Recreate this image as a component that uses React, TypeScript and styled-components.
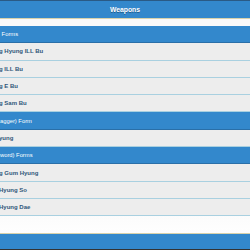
import React from 'react';

import styled, { createGlobalStyle } from 'styled-components';

const sections = [
  { title: ' Forms', items: ['g Hyung ILL Bu', 'g ILL Bu', 'g E Bu', 'g Sam Bu'] },
  { title: 'agger) Form', items: ['yung'] },
  { title: 'word) Forms', items: ['g Gum Hyung', 'Hyung So', 'Hyung Dae'] },
];

const App = () => {
  return (
    <Page>
      <GlobalStyle />
      <Header>
        <Title>Weapons</Title>
      </Header>
      <Content>
        <List>
          {sections.map((section) => (
            <React.Fragment key={section.title}>
              <Divider>{section.title}</Divider>
              {section.items.map((item) => (
                <Item key={item}>{item}</Item>
              ))}
            </React.Fragment>
          ))}
        </List>
      </Content>
      <Footer />
    </Page>
  );
};

export default App;

const GlobalStyle = createGlobalStyle`
  html, body {
    margin: 0;
    padding: 0;
    overflow: hidden;
  }
  body {
    font-family: 'Liberation Sans', Arial, sans-serif;
  }
`;

const Page = styled.div`
  display: flex;
  flex-direction: column;
  width: 250px;
  height: 250px;
  background: #f9f9f9;
`;

const Header = styled.header`
  display: flex;
  justify-content: center;
  align-items: center;
  height: 17px;
  border-top: 1px solid #2a5a85;
  border-bottom: 1px solid #d8d2ac;
  background: #3388cc;
`;

const Title = styled.h1`
  margin: 0;
  font-size: 6.8px;
  font-weight: bold;
  color: #fff;
  text-shadow: 0 1px 0 #1f5f8f;
`;

const Content = styled.main`
  flex: 1;
  padding-top: 7px;
  background: linear-gradient(#f9f9f9, #f9f9f9 85%, #fefefe);
`;

const List = styled.ul`
  margin: 0 0 0 -1px;
  padding: 0;
  list-style: none;
`;

const Divider = styled.li`
  display: flex;
  align-items: center;
  height: 16.3px;
  padding-left: 1px;
  border-bottom: 1px solid #2a6fa8;
  background: #3388cc;
  font-size: 5.8px;
  color: #fff;
  white-space: pre;
`;

const Item = styled.li`
  display: flex;
  align-items: center;
  height: 16.3px;
  border-bottom: 1px solid #a9d0e0;
  background: #ededed;
  font-size: 6px;
  font-weight: bold;
  color: #30577a;
`;

const Footer = styled.footer`
  height: 15px;
  border-top: 1px solid #d8d2ac;
  border-bottom: 1px solid #333;
  background: #3388cc;
`;
